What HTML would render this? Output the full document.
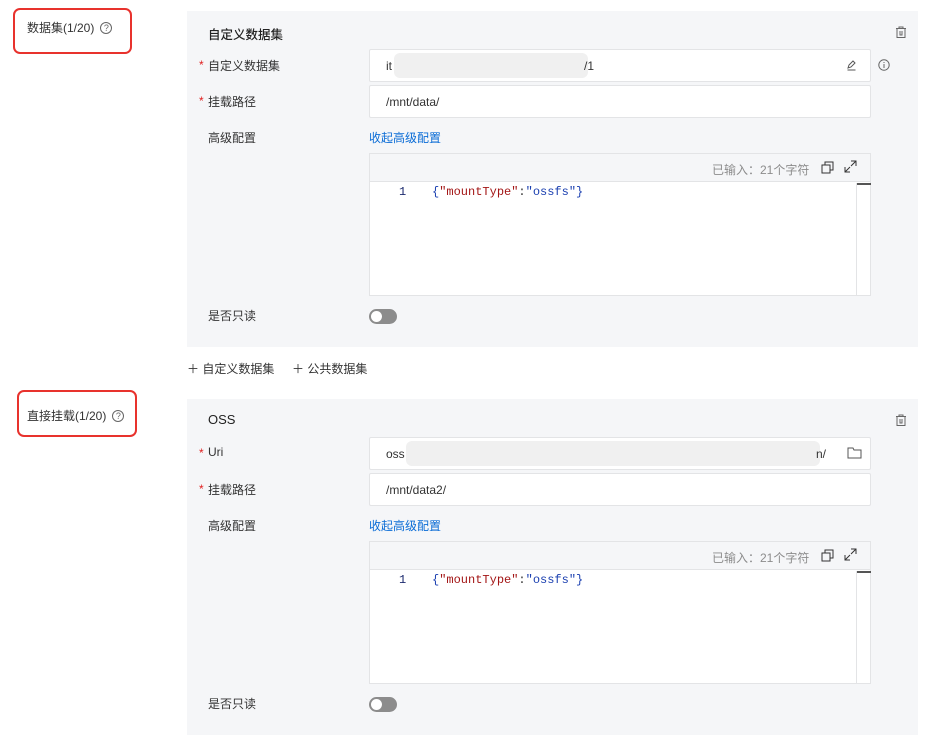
<!DOCTYPE html>
<html><head><meta charset="utf-8"><style>
*{margin:0;padding:0;box-sizing:border-box}
body{width:930px;height:745px;background:#fff;position:relative;overflow:hidden;font-family:"Liberation Sans","Noto Sans CJK SC",sans-serif;font-size:12px;color:#333}
.a{position:absolute;white-space:nowrap}
.panel{position:absolute;left:187px;width:731px;height:336px;background:#f5f6f8}
.inp{position:absolute;left:182px;width:502px;height:33px;background:#fff;border:1px solid #e3e4e6;border-radius:2px}
.inp span{position:absolute;left:16px;top:9px;font-size:12px;color:#333}
.lbl{position:absolute;left:21px;font-size:12px;color:#333}
.star{color:#e02020;position:absolute;left:-9px;top:1px}
.blur{position:absolute;top:3px;height:25px;background:#f0f0f0;border-radius:6px}
.ed{position:absolute;left:182px;width:502px;height:143px;border:1px solid #e3e4e6;background:#fff}
.edh{height:28px;background:#f5f6f8;border-bottom:1px solid #e3e4e6;position:relative}
.tog{position:absolute;left:182px;width:28px;height:15px;border-radius:8px;background:#8c8c8c}
.tog:after{content:"";position:absolute;left:2px;top:2px;width:11px;height:11px;border-radius:50%;background:#fff}
.red{position:absolute;border:2px solid #e8322d;border-radius:7px}
.q{display:inline-block;width:12px;height:12px;border:1px solid #666;border-radius:50%;font-size:9px;line-height:10px;text-align:center;color:#666;vertical-align:1px;margin-left:6px}
</style></head><body>

<div class="red" style="left:13px;top:8px;width:119px;height:46px"></div>
<div class="a" style="left:27px;top:19px;font-size:12px">数据集(1/20)<span class="q">?</span></div>
<div class="red" style="left:17px;top:390px;width:120px;height:47px"></div>
<div class="a" style="left:27px;top:407px;font-size:12px">直接挂载(1/20)<span class="q">?</span></div>

<!-- panel 1 -->
<div class="panel" style="top:11px">
  <div class="a" style="left:21px;top:13px;font-size:12.5px;color:#222;font-weight:500">自定义数据集</div>
  <svg class="a" style="left:707px;top:14px" width="14" height="14" viewBox="0 0 14 14" fill="none" stroke="#666" stroke-width="1"><path d="M2 3.5h10M5 3.5V2h4v1.5M3 3.5v9h8v-9M6 6v4h2V6"/></svg>
  <div class="lbl" style="top:46px"><span class="star">*</span>自定义数据集</div>
  <div class="inp" style="top:38px"><span>it</span><div class="blur" style="left:24px;width:194px"></div><span style="left:214px">/1</span>
    <svg class="a" style="left:476px;top:9px" width="12" height="12" viewBox="0 0 12 12" fill="none" stroke="#555"><path d="M2 9l1-3 4-4 2 2-4 4zM1.5 11h8"/></svg></div>
  <svg class="a" style="left:691px;top:48px" width="12" height="12" viewBox="0 0 12 12" fill="none" stroke="#666"><circle cx="6" cy="6" r="5.2"/><path d="M6 5v4M6 3v1"/></svg>
  <div class="lbl" style="top:82px"><span class="star">*</span>挂载路径</div>
  <div class="inp" style="top:74px"><span>/mnt/data/</span></div>
  <div class="lbl" style="top:118px">高级配置</div>
  <div class="a" style="left:182px;top:118px;color:#0a6cd6">收起高级配置</div>
  <div class="ed" style="top:142px"><div class="edh">
    <div class="a" style="left:342px;top:7px;color:#8c8c8c">已输入：21个字符</div>
    <svg class="a" style="left:451px;top:7px" width="13" height="13" viewBox="0 0 13 13" fill="none" stroke="#333"><path d="M1 4h8v8H1zM4 4V1h8v8H9"/></svg>
    <svg class="a" style="left:474px;top:6px" width="13" height="13" viewBox="0 0 13 13" fill="none" stroke="#333"><path d="M7 1h5v5M12 1L7 6M6 12H1V7M1 12l5-5"/></svg>
  </div>
    <div class="a" style="left:486px;top:29px;width:1px;height:112px;background:#e3e4e6"></div>
    <div class="a" style="left:487px;top:29px;width:14px;height:2px;background:#555"></div>
    <div class="a" style="left:29px;top:31px;font-family:'Liberation Mono',monospace;font-size:12px;color:#1c2a6e">1</div>
    <div class="a" style="left:62px;top:31px;font-family:'Liberation Mono',monospace;font-size:12px;color:#1a3fb0">{<span style="color:#a31515">"mountType"</span><span style="color:#333">:</span>"ossfs"}</div>
  </div>
  <div class="lbl" style="top:296px">是否只读</div>
  <div class="tog" style="top:298px"></div>
</div>

<div class="a" style="left:187px;top:360px;font-size:12px">＋ 自定义数据集</div>
<div class="a" style="left:292px;top:360px;font-size:12px">＋ 公共数据集</div>

<!-- panel 2 -->
<div class="panel" style="top:399px">
  <div class="a" style="left:21px;top:13px;font-size:13px;color:#222">OSS</div>
  <svg class="a" style="left:707px;top:14px" width="14" height="14" viewBox="0 0 14 14" fill="none" stroke="#666" stroke-width="1"><path d="M2 3.5h10M5 3.5V2h4v1.5M3 3.5v9h8v-9M6 6v4h2V6"/></svg>
  <div class="lbl" style="top:46px"><span class="star">*</span>Uri</div>
  <div class="inp" style="top:38px"><span>oss</span><div class="blur" style="left:36px;width:414px"></div><span style="left:446px">n/</span>
    <svg class="a" style="left:477px;top:8px" width="15" height="13" viewBox="0 0 15 13" fill="none" stroke="#555"><path d="M1 2h5l1 2h7v8H1z"/></svg></div>
  <div class="lbl" style="top:82px"><span class="star">*</span>挂载路径</div>
  <div class="inp" style="top:74px"><span>/mnt/data2/</span></div>
  <div class="lbl" style="top:118px">高级配置</div>
  <div class="a" style="left:182px;top:118px;color:#0a6cd6">收起高级配置</div>
  <div class="ed" style="top:142px"><div class="edh">
    <div class="a" style="left:342px;top:7px;color:#8c8c8c">已输入：21个字符</div>
    <svg class="a" style="left:451px;top:7px" width="13" height="13" viewBox="0 0 13 13" fill="none" stroke="#333"><path d="M1 4h8v8H1zM4 4V1h8v8H9"/></svg>
    <svg class="a" style="left:474px;top:6px" width="13" height="13" viewBox="0 0 13 13" fill="none" stroke="#333"><path d="M7 1h5v5M12 1L7 6M6 12H1V7M1 12l5-5"/></svg>
  </div>
    <div class="a" style="left:486px;top:29px;width:1px;height:112px;background:#e3e4e6"></div>
    <div class="a" style="left:487px;top:29px;width:14px;height:2px;background:#555"></div>
    <div class="a" style="left:29px;top:31px;font-family:'Liberation Mono',monospace;font-size:12px;color:#1c2a6e">1</div>
    <div class="a" style="left:62px;top:31px;font-family:'Liberation Mono',monospace;font-size:12px;color:#1a3fb0">{<span style="color:#a31515">"mountType"</span><span style="color:#333">:</span>"ossfs"}</div>
  </div>
  <div class="lbl" style="top:296px">是否只读</div>
  <div class="tog" style="top:298px"></div>
</div>
</body></html>
